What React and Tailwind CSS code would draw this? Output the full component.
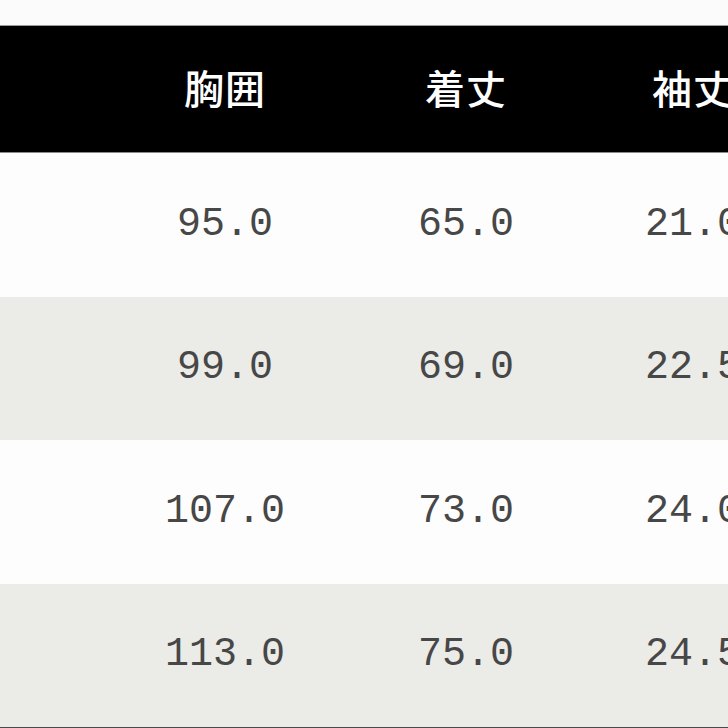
import React from 'react';

const rows = [
  ['95.0', '65.0', '21.0'],
  ['99.0', '69.0', '22.5'],
  ['107.0', '73.0', '24.0'],
  ['113.0', '75.0', '24.5'],
];

const widths = ['w-[240px]', 'w-[242px]', 'w-[212px]'];

const App = () => {
  return (
    <div className="w-[728px] h-[728px] overflow-hidden bg-white flex flex-col">
      <div className="h-[26px] bg-[#fbfbfb] border-b border-[#9a9a9a] shrink-0" />
      <div className="h-[126px] bg-black flex items-center shrink-0 -mr-[100px] pb-[4px]">
        <div className="w-[105px] shrink-0" />
        {['胸囲', '着丈', '袖丈'].map((h, j) => (
          <div
            key={h}
            className={`${widths[j]} shrink-0 text-center text-white text-[40px] font-medium tracking-[1px] [font-family:'Noto_Sans_CJK_JP',sans-serif]`}
          >
            {h}
          </div>
        ))}
      </div>
      <div className="-mr-[100px] flex flex-col border-t border-[#8a8a8a]">
        {rows.map((r, i) => (
          <div
            key={i}
            className={`h-[143.5px] shrink-0 flex items-center ${i % 2 ? 'bg-[#ebebe8]' : 'bg-[#fdfdfd]'}`}
          >
            <div className="w-[105px] shrink-0" />
            {r.map((v, j) => (
              <div
                key={j}
                className={`${widths[j]} shrink-0 text-center text-[40px] text-[#474747] slashed-zero [font-family:'Liberation_Mono',monospace]`}
              >
                {v}
              </div>
            ))}
          </div>
        ))}
      </div>
      <div className="h-[2px] bg-[#4a4a4a] shrink-0" />
    </div>
  );
};

export default App;
